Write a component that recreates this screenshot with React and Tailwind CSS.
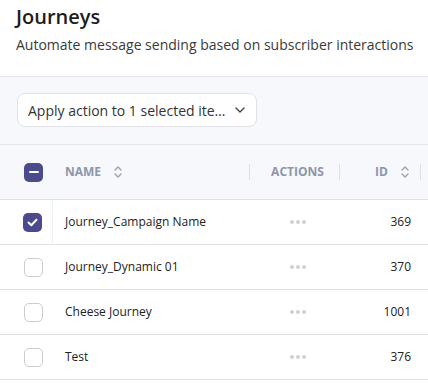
import React from 'react';

const rows = [
  { name: 'Journey_Campaign Name', id: 369, checked: true },
  { name: 'Journey_Dynamic 01', id: 370 },
  { name: 'Cheese Journey', id: 1001 },
  { name: 'Test', id: 376 },
];

const SortIcon = () => (
  <svg width="10" height="14" viewBox="0 0 10 14" fill="none" stroke="#9aa1b3" strokeWidth="1.4" strokeLinecap="round" strokeLinejoin="round">
    <path d="M2 5l3-3 3 3" />
    <path d="M2 9l3 3 3-3" />
  </svg>
);

const Checkbox = ({ checked, indeterminate }) => {
  if (checked || indeterminate) {
    return (
      <span className="flex h-[19px] w-[19px] items-center justify-center rounded-[5px] bg-[#4a4a8c]">
        {indeterminate ? (
          <span className="h-[2.5px] w-[10px] rounded bg-white" />
        ) : (
          <svg width="11" height="9" viewBox="0 0 11 9" fill="none" stroke="white" strokeWidth="2" strokeLinecap="round" strokeLinejoin="round">
            <path d="M1.5 4.5l2.8 2.8L9.5 1.8" />
          </svg>
        )}
      </span>
    );
  }
  return <span className="block h-[19px] w-[19px] rounded-[5px] border border-[#c9ccd3] bg-white" />;
};

const Divider = () => <span className="ml-auto h-4 w-px bg-[#dcdfe6]" />;

export default function App() {
  return (
    <div className="w-[428px] h-[383px] overflow-hidden bg-white font-['Open_Sans',sans-serif] text-[#2b2b2b]">
      {/* Page heading */}
      <div className="px-4 pt-[2px] h-[76px]">
        <h1 className="text-[20px] font-semibold leading-[30px] text-[#1d1d1f]">Journeys</h1>
        <p className="mt-[3px] whitespace-nowrap text-[14px] leading-[20px] text-[#3a3a3a]">
          Automate message sending based on subscriber interactions
        </p>
      </div>

      {/* Bulk action toolbar */}
      <div className="h-[69px] border-y border-[#e3e5ec] bg-[#f7f8fc] px-[17px] pt-[16px]">
        <button className="flex h-[34px] w-[240px] items-center gap-[6px] rounded-lg border border-[#e0e2e8] bg-white pl-[10px] pr-[11px] text-[14px] text-[#333]">
          <span className="min-w-0 truncate">Apply action to 1 selected items</span>
          <svg width="10" height="6" viewBox="0 0 10 6" fill="none" stroke="#444" strokeWidth="1.4" strokeLinecap="round" strokeLinejoin="round" className="shrink-0">
            <path d="M1 1l4 4 4-4" />
          </svg>
        </button>
      </div>

      {/* Table */}
      <div className="grid grid-cols-[53px_197px_90px_81px_1fr]">
        <div className="flex h-[55px] items-center justify-end border-b border-[#dfe1e6] bg-[#f7f8fc] pr-[10px]">
          <Checkbox indeterminate />
        </div>
        <div className="flex items-center gap-3 border-b border-[#dfe1e6] bg-[#f7f8fc] pl-3 text-[12px] font-bold text-[#8d96a8]">
          NAME <SortIcon />
          <Divider />
        </div>
        <div className="flex items-center border-b border-[#dfe1e6] bg-[#f7f8fc] pl-[6px] text-[12px] font-bold text-[#8d96a8]">
          <span className="flex-1 text-center">ACTIONS</span>
          <Divider />
        </div>
        <div className="flex items-center border-b border-[#dfe1e6] bg-[#f7f8fc] pl-[35px] text-[12px] font-bold text-[#8d96a8]">
          <span>ID</span>
          <span className="ml-[12px]"><SortIcon /></span>
          <Divider />
        </div>
        <div className="border-b border-[#dfe1e6] bg-[#f7f8fc]" />

        {rows.map((r, i) => (
          <React.Fragment key={r.id}>
            <div className={`flex h-[45px] items-center justify-end border-b border-[#dfe1e6] pr-[10px] ${i === 0 ? 'border-r border-r-[#f0f1f4]' : ''}`}>
              <Checkbox checked={r.checked} />
            </div>
            <div className="flex items-center border-b border-[#dfe1e6] pl-3 text-[12px] text-[#222]">{r.name}</div>
            <div className="flex items-center justify-center gap-[2px] border-b border-[#dfe1e6] pl-[6px]">
              <span className="h-[4px] w-[4px] rounded-full bg-[#cfd1d6]" />
              <span className="h-[4px] w-[4px] rounded-full bg-[#cfd1d6]" />
              <span className="h-[4px] w-[4px] rounded-full bg-[#cfd1d6]" />
            </div>
            <div className="flex items-center justify-end border-b border-[#dfe1e6] pr-[10px] text-[12px] text-[#222]">{r.id}</div>
            <div className="border-b border-[#dfe1e6]" />
          </React.Fragment>
        ))}
      </div>
    </div>
  );
}
